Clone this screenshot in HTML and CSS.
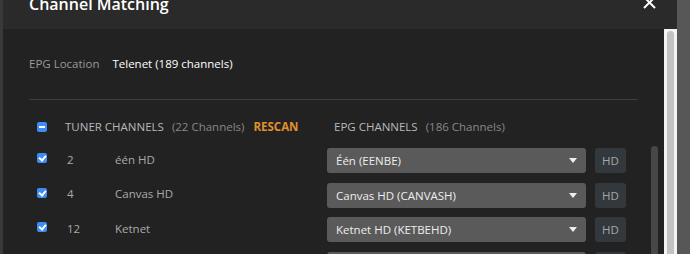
FILE: index.html
```html
<!DOCTYPE html>
<html lang="en">
<head>
    <meta charset="UTF-8">
    <title>Channel Matching</title>
    <link rel="stylesheet" href="styles.css">
</head>
<body>
    <div class="modal">
        <div class="modal-header">
            <h2>Channel Matching</h2>
            <button class="close-btn" aria-label="Close">
                <svg width="13" height="13" viewBox="0 0 13 13"><path d="M1 1L12 12M12 1L1 12" stroke="#fff" stroke-width="2"/></svg>
            </button>
        </div>

        <div class="modal-body">
            <div class="content">
                <div class="location">
                    <span class="location-label">EPG Location</span>
                    <span class="location-value">Telenet (189 channels)</span>
                </div>

                <div class="divider"></div>

                <div class="list-head">
                    <div class="tuner-head">
                        <span class="checkbox partial"></span>
                        <span class="col-title">TUNER CHANNELS</span>
                        <span class="count">(22 Channels)</span>
                        <a class="rescan">RESCAN</a>
                    </div>
                    <span class="col-title epg-title">EPG CHANNELS</span>
                    <span class="count">(186 Channels)</span>
                </div>

                <div class="channel-list">
                    <div class="rows">
                        <div class="row">
                            <span class="checkbox checked"></span>
                            <span class="num">2</span>
                            <span class="name">één HD</span>
                            <div class="select">Één (EENBE)<span class="caret"></span></div>
                            <span class="hd">HD</span>
                        </div>
                        <div class="row">
                            <span class="checkbox checked"></span>
                            <span class="num">4</span>
                            <span class="name">Canvas HD</span>
                            <div class="select">Canvas HD (CANVASH)<span class="caret"></span></div>
                            <span class="hd">HD</span>
                        </div>
                        <div class="row">
                            <span class="checkbox checked"></span>
                            <span class="num">12</span>
                            <span class="name">Ketnet</span>
                            <div class="select">Ketnet HD (KETBEHD)<span class="caret"></span></div>
                            <span class="hd">HD</span>
                        </div>
                        <div class="row">
                            <span class="checkbox checked"></span>
                            <span class="num">13</span>
                            <span class="name">VTM HD</span>
                            <div class="select">VTM HD (VTMHD)<span class="caret"></span></div>
                            <span class="hd">HD</span>
                        </div>
                    </div>
                    <div class="list-scroll"><div class="list-thumb"></div></div>
                </div>
            </div>
            <div class="page-scroll"><div class="page-thumb"></div></div>
        </div>
    </div>
</body>
</html>
```

FILE: styles.css
```css
body {
    margin: 0;
    height: 254px;
    overflow: hidden;
    background: #575757;
    font-family: 'Open Sans', 'Noto Sans', sans-serif;
    font-size: 11.5px;
}
.modal {
    width: 674px;
    height: 254px;
    border-left: 3px solid #393939;
    background: #222;
    display: flex;
    flex-direction: column;
    overflow: hidden;
}
.modal-header {
    height: 29px;
    flex-shrink: 0;
    background: #2a2a2a;
    display: flex;
    justify-content: space-between;
    padding: 0 21px 0 26px;
    overflow: hidden;
}
.modal-header h2 {
    margin: -8px 0 0;
    font-size: 16px;
    line-height: 24px;
    font-weight: 600;
    color: #fff;
}
.close-btn {
    background: none;
    border: none;
    padding: 0;
    margin-top: -4px;
    height: 13px;
}
.modal-body {
    flex: 1;
    display: flex;
    min-height: 0;
}
.content {
    flex: 1;
    padding: 0 3px 0 26px;
}
.location {
    margin-top: 26px;
    line-height: 18px;
    display: flex;
    gap: 13px;
}
.location-label {
    color: #999;
}
.location-value {
    color: #fff;
}
.divider {
    height: 1px;
    background: #3b4045;
    margin: 26px 23px 0 0;
}
.list-head {
    margin-top: 18px;
    line-height: 18px;
    display: flex;
    align-items: center;
    padding-left: 8px;
}
.tuner-head {
    width: 297px;
    display: flex;
    align-items: center;
}
.col-title {
    color: #b8b8b8;
    margin-left: 18px;
}
.epg-title {
    margin-left: 0;
}
.count {
    color: #888;
    margin-left: 8px;
}
.rescan {
    color: #e0902c;
    font-weight: 700;
    margin-left: 9px;
}
.checkbox {
    width: 10px;
    height: 10px;
    border-radius: 2px;
    background: #3d8bf5;
    position: relative;
    flex-shrink: 0;
}
.checkbox.partial::after {
    content: '';
    position: absolute;
    left: 2px;
    top: 4px;
    width: 6px;
    height: 2px;
    background: #fff;
}
.checkbox.checked::after {
    content: '';
    position: absolute;
    left: 3px;
    top: 1px;
    width: 3px;
    height: 5px;
    border: solid #fff;
    border-width: 0 2px 2px 0;
    transform: rotate(40deg);
}
.channel-list {
    margin-top: 10px;
    display: flex;
    height: 200px;
}
.rows {
    flex: 1;
    padding-top: 2px;
}
.row {
    height: 25px;
    margin-bottom: 9.5px;
    display: flex;
    align-items: center;
    padding-left: 8px;
}
.row .checkbox {
    margin-top: -5px;
}
.num {
    color: #aaa;
    width: 48px;
    margin-left: 20px;
    margin-top: -3px;
}
.name {
    color: #aaa;
    width: 212px;
    margin-top: -3px;
}
.select {
    width: 250px;
    height: 25px;
    padding-left: 9px;
    line-height: 25px;
    background: #5a5a5a;
    color: #eee;
    border-radius: 3px;
    position: relative;
}
.caret {
    position: absolute;
    right: 9px;
    top: 10px;
    border-left: 4px solid transparent;
    border-right: 4px solid transparent;
    border-top: 5px solid #eee;
}
.hd {
    margin-left: 9px;
    width: 31px;
    height: 25px;
    line-height: 25px;
    text-align: center;
    background: #33383d;
    color: #a3a7ab;
    border-radius: 3px;
}
.list-scroll {
    width: 7px;
    margin-right: 3px;
}
.list-thumb {
    height: 200px;
    background: #474747;
    border-radius: 4px;
}
.page-scroll {
    width: 13px;
    background: #f3f3f3;
    padding: 2px 3px 0;
    box-sizing: border-box;
}
.page-thumb {
    height: 300px;
    background: #c2c2c2;
    border-radius: 4px;
}
```
